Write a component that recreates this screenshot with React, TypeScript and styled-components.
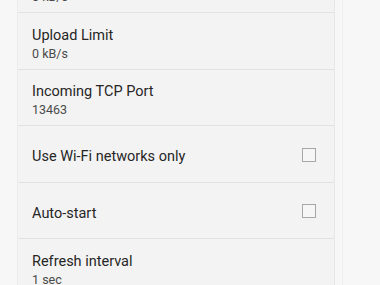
import React from 'react';
import styled, {createGlobalStyle} from 'styled-components';

const GlobalStyle = createGlobalStyle`
  html, body {
    margin: 0;
    padding: 0;
    background: #f7f7f7;
    font-family: Roboto, "Noto Sans", "Liberation Sans", sans-serif;
  }
`

type Setting = {
    title: string,
    summary?: string,
    checkbox?: boolean
}

const settings: Setting[] = [
    {title: 'Download Limit', summary: '0 kB/s'},
    {title: 'Upload Limit', summary: '0 kB/s'},
    {title: 'Incoming TCP Port', summary: '13463'},
    {title: 'Use Wi-Fi networks only', checkbox: true},
    {title: 'Auto-start', checkbox: true},
    {title: 'Refresh interval', summary: '1 sec'},
];

export default function App() {
    return (
        <>
            <GlobalStyle/>
            <Page>
                <Panel>
                    {settings.map((item) => (
                        <Row key={item.title}>
                            <Texts>
                                <Title>{item.title}</Title>
                                {item.summary && <Summary>{item.summary}</Summary>}
                            </Texts>
                            {item.checkbox && <CheckBox/>}
                        </Row>
                    ))}
                </Panel>
                <Gutter/>
            </Page>
        </>
    );
}

const Page = styled.div`
  width: 380px;
  height: 285px;
  overflow: hidden;
  display: flex;
  padding-left: 17px;
  box-sizing: border-box;
  background: #f7f7f7;
`

const Panel = styled.div`
  width: 316px;
  flex-shrink: 0;
  margin-top: -43.5px;
  background: #f3f3f3;
  border-left: 1px solid #ececec;
  border-right: 1px solid #e6e6e6;
`

const Gutter = styled.div`
  width: 7px;
  border-right: 1px solid #efefef;
`

const Row = styled.div`
  height: 56.5px;
  box-sizing: border-box;
  display: flex;
  align-items: center;
  padding: 7px 18px 0 14px;
  border-bottom: 1px solid #e2e2e2;
`

const Texts = styled.div`
  flex: 1;
  display: flex;
  flex-direction: column;
  gap: 1px;
`

const Title = styled.div`
  font-size: 14.5px;
  line-height: 18px;
  color: #262626;
`

const Summary = styled.div`
  font-size: 12.5px;
  line-height: 16px;
  color: #4a4a4a;
`

const CheckBox = styled.div`
  width: 14px;
  height: 14px;
  margin-top: -5px;
  box-sizing: border-box;
  border: 1.5px solid #a8a8a8;
  background: #f6f6f6;
`
